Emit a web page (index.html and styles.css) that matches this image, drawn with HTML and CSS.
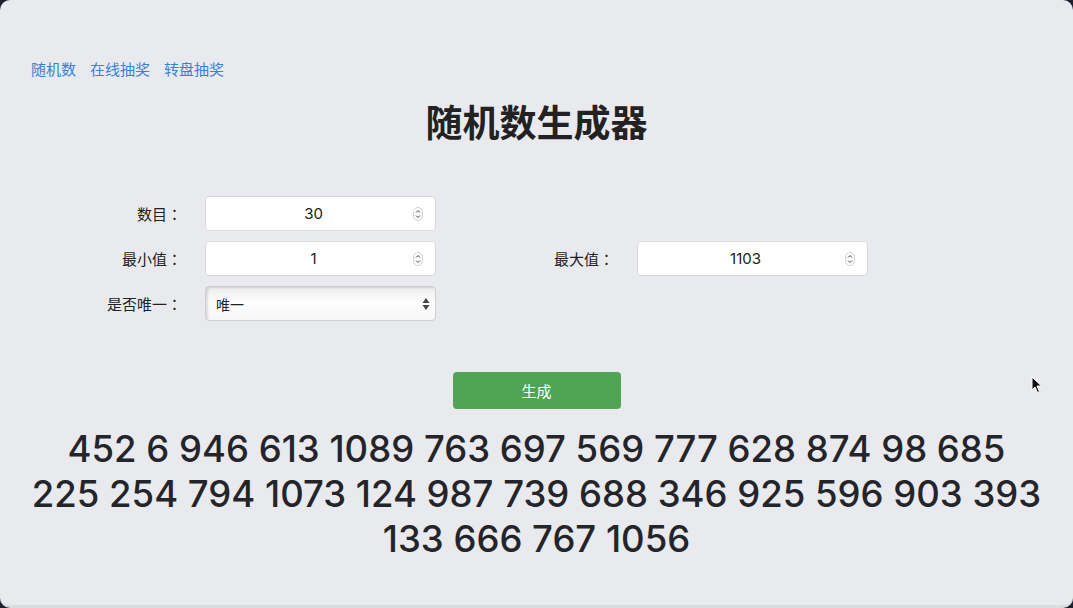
FILE: index.html
```html
<!DOCTYPE html>
<html lang="zh-CN">
<head>
    <meta charset="UTF-8">
    <meta name="viewport" content="width=device-width, initial-scale=1.0">
    <title>随机数生成器</title>
    <link rel="stylesheet" href="styles.css">
</head>
<body>

<div class="window">
    <!-- Top links -->
    <nav class="nav">
        <a href="#">随机数</a>
        <a href="#">在线抽奖</a>
        <a href="#">转盘抽奖</a>
    </nav>

    <h1 class="title">随机数生成器</h1>

    <!-- Settings -->
    <div class="form">
        <label class="label" lang="zh-TW">数目：</label>
        <div class="field">
            <span class="value">30</span>
            <svg class="spin" width="10" height="14" viewBox="0 0 10 14"><rect x="0.5" y="0.5" width="9" height="13" rx="4.5" fill="#fff" stroke="#cfcfd2"/><path d="M3 5.5 L5 3.5 L7 5.5 M3 8.5 L5 10.5 L7 8.5" fill="none" stroke="#444" stroke-width="1"/></svg>
        </div>
        <div></div>
        <div></div>

        <label class="label" lang="zh-TW">最小值：</label>
        <div class="field">
            <span class="value">1</span>
            <svg class="spin" width="10" height="14" viewBox="0 0 10 14"><rect x="0.5" y="0.5" width="9" height="13" rx="4.5" fill="#fff" stroke="#cfcfd2"/><path d="M3 5.5 L5 3.5 L7 5.5 M3 8.5 L5 10.5 L7 8.5" fill="none" stroke="#444" stroke-width="1"/></svg>
        </div>
        <label class="label" lang="zh-TW">最大值：</label>
        <div class="field">
            <span class="value">1103</span>
            <svg class="spin" width="10" height="14" viewBox="0 0 10 14"><rect x="0.5" y="0.5" width="9" height="13" rx="4.5" fill="#fff" stroke="#cfcfd2"/><path d="M3 5.5 L5 3.5 L7 5.5 M3 8.5 L5 10.5 L7 8.5" fill="none" stroke="#444" stroke-width="1"/></svg>
        </div>

        <label class="label" lang="zh-TW">是否唯一：</label>
        <div class="select">
            <span>唯一</span>
            <svg width="8" height="14" viewBox="0 0 8 14"><path d="M4 1 L7.5 6 L0.5 6 Z M4 13 L7.5 8 L0.5 8 Z" fill="#444"/></svg>
        </div>
    </div>

    <div class="actions">
        <button class="btn">生成</button>
    </div>

    <p class="result">452 6 946 613 1089 763 697 569 777 628 874 98 685<br>225 254 794 1073 124 987 739 688 346 925 596 903 393<br>133 666 767 1056</p>

    <!-- mouse pointer -->
    <svg class="cursor" width="12" height="18" viewBox="0 0 12 18"><path d="M1 1 L1 14 L4 11 L6.5 16.5 L8.5 15.5 L6 10 L10.5 10 Z" fill="#111" stroke="#fff" stroke-width="1"/></svg>
</div>

</body>
</html>
```

FILE: styles.css
```css
html, body {
    margin: 0;
    padding: 0;
    height: 100%;
}

body {
    background-color: #1c2230;
    font-family: Inter, "Noto Sans CJK SC", sans-serif;
    color: #222;
}

.window {
    position: relative;
    height: 100%;
    box-sizing: border-box;
    background-color: #e9eaee;
    border-radius: 10px;
    border-bottom: 3px solid #dcdde2;
    padding-top: 59px;
}

.nav {
    display: flex;
    gap: 14px;
    padding-left: 31px;
}

.nav a {
    color: #3a80d8;
    font-size: 15px;
    line-height: 22px;
    text-decoration: none;
}

.title {
    margin: 18px 0 0;
    text-align: center;
    font-size: 37px;
    line-height: 50px;
    font-weight: 700;
}

.form {
    display: grid;
    grid-template-columns: 182px 231px 155px 231px;
    column-gap: 23px;
    row-gap: 10px;
    margin-top: 47px;
}

.label {
    text-align: right;
    font-family: "Noto Sans CJK TC", "Noto Sans CJK JP", sans-serif;
    font-size: 15px;
    line-height: 35px;
    color: #222;
}

.field {
    height: 35px;
    box-sizing: border-box;
    background-color: #fff;
    border: 1px solid #d9d9dc;
    border-radius: 4px;
    display: flex;
    align-items: center;
    padding: 0 12px 0 8px;
}

.field .value {
    flex: 1;
    text-align: center;
    font-size: 15px;
}

.select {
    height: 35px;
    box-sizing: border-box;
    border: 1px solid #cfcfd2;
    border-radius: 4px;
    background: linear-gradient(#ececec, #fdfdfd 45%, #f6f6f6);
    box-shadow: inset 2px 1px 2px rgba(0, 0, 0, 0.12);
    display: flex;
    align-items: center;
    justify-content: space-between;
    padding: 0 5px 0 10px;
    font-size: 14px;
}

.actions {
    display: flex;
    justify-content: center;
    margin-top: 51px;
}

.btn {
    width: 168px;
    height: 37px;
    background-color: #4fa553;
    color: #fff;
    border: none;
    border-radius: 4px;
    font-family: inherit;
    font-size: 15px;
    cursor: pointer;
}

.result {
    margin: 18px 0 0;
    text-align: center;
    font-size: 36.5px;
    line-height: 45px;
    font-weight: 500;
    color: #24252a;
}

.cursor {
    position: absolute;
    left: 1031px;
    top: 376px;
}
```
